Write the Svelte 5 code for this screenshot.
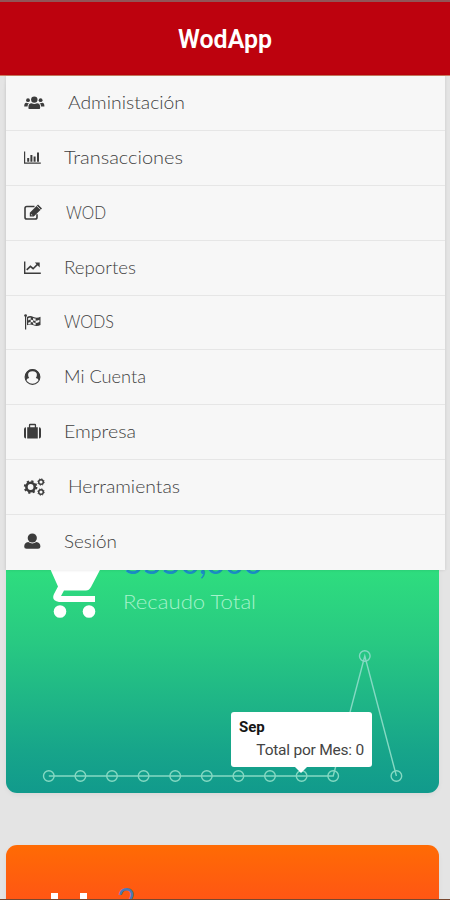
<script lang="ts">
  type Item = { label: string; icon: string; width: number; x: number }

  const items: Item[] = [
    { label: 'Administación', icon: 'users', width: 117, x: 68 },
    { label: 'Transacciones', icon: 'bars', width: 119, x: 64 },
    { label: 'WOD', icon: 'edit', width: 40, x: 66 },
    { label: 'Reportes', icon: 'line', width: 72, x: 64 },
    { label: 'WODS', icon: 'flag', width: 50, x: 64 },
    { label: 'Mi Cuenta', icon: 'account', width: 82, x: 64 },
    { label: 'Empresa', icon: 'suitcase', width: 72, x: 64 },
    { label: 'Herramientas', icon: 'cogs', width: 112, x: 68 },
    { label: 'Sesión', icon: 'user', width: 53, x: 64 },
  ]

  const values = [0, 0, 0, 0, 0, 0, 0, 0, 0, 0, 1, 0]
  const points = values.map((v, i) => ({ x: 42.8 + i * 31.6, y: 206 - v * 120 }))
  const line = points.map((p) => `${p.x},${p.y}`).join(' ')
</script>

<div class="app">
  <header class="header">
    <h1 class="header__title">
      <svg width="98" height="36"><text x="2" y="27" textLength="94" lengthAdjust="spacingAndGlyphs">WodApp</text></svg>
    </h1>
  </header>

  <nav class="menu">
    {#each items as item}
      <a class="menu__item" href="#{item.icon}">
        <svg class="menu__icon" viewBox="0 0 22 20" width="22" height="20">
          {#if item.icon === 'users'}
            <circle cx="11.3" cy="6.6" r="3.2" />
            <circle cx="5" cy="7.2" r="1.9" />
            <circle cx="17.6" cy="7.2" r="1.9" />
            <path d="M6 16q-.6 0-.6-1.5 0-4.2 3.2-4.2 2.7 1.5 5.4 0 3.2 0 3.2 4.2 0 1.5-.9 1.5zM1.2 13.5q0-3.7 2-3.7 1.5.8 3 .3-1.7 1.3-1.7 3.4zM21.4 13.5q0-3.7-2-3.7-1.5.8-3 .3 1.7 1.3 1.7 3.4z" />
          {:else if item.icon === 'bars'}
            <path d="M1 3.5h1.2v11h15.6v1.3H1zM4.2 10h2v3.7h-2zM7.4 7h2v6.7h-2zM10.6 8.4h2v5.3h-2zM14 4.5h2v9.2h-2z" />
          {:else if item.icon === 'edit'}
            <path d="M11.5 3.5H3.8Q2 3.5 2 5.3v8.9Q2 16 3.8 16h8.4q1.8 0 1.8-1.8v-3" class="stroke" />
            <path d="M6.8 9.8 15 1.6l4 3.8-8.2 8.2h-4zM8.2 11v1.2h1.5z" fill-rule="evenodd" />
            <path d="m13.8 2.9 3.8 3.8" class="gap" />
          {:else if item.icon === 'line'}
            <path d="M1 3.5h1.4v11h15.4V16H1z" />
            <path d="m3.7 11.8 3.7-3.5 2.7 2.4L15 5.9" class="stroke" />
            <path d="M11.8 4.5h4.9v4.9z" />
          {:else if item.icon === 'flag'}
            <circle cx="2.6" cy="3.6" r="1.4" />
            <path d="M2 4h1.2v13.5H2zM4 5q3-1.8 6.5 0t7-.3V13q-3.5 2-7 .3T4 13.2zM5.2 6v2.4q1.2-.8 2.5-.8v2.3q-1.3 0-2.5.8v1.6q1.2-.6 2.5-.6V9.9q1.4 0 2.4.6V8.2q-1 0-2.4-.6V5.4Q6.3 5.4 5.2 6zM10.1 6.1v2.2q1.3.6 2.5.5V6.6q-1.2 0-2.5-.5zm0 4.2v2q1.3.7 2.5.7v-2.1q-1.2 0-2.5-.6zm2.5-1.5v2.1q1.8 0 3.8-1V7.8q-1.8 1-3.8 1z" fill-rule="evenodd" />
          {:else if item.icon === 'account'}
            <circle cx="9.5" cy="10" r="7.4" class="ring" />
            <path d="M3.2 13.6A7.4 7.4 0 1 1 15.8 13.6q-.6-2.2-3-2.6 1.1-1.2 1.1-3.2 0-3.6-4.4-3.6T5.1 7.800q0 2 1.1 3.2-2.400.4-3 2.600z" />
          {:else if item.icon === 'suitcase'}
            <path d="M1 7.200Q1 5.200 3 5.200V16.500Q1 16.500 1 14.500zM18 7.200q0-2-2-2V16.500q2 0 2-2z" />
            <path d="M4.200 5.200h1.700V3q0-1.200 1.200-1.200h4.800q1.200 0 1.200 1.200v2.200h1.700V16.500H4.200zm3-2v2h4.600v-2z" fill-rule="evenodd" />
          {:else if item.icon === 'cogs'}
            <circle cx="7.6" cy="10" r="4.2" class="cog" />
            <circle cx="7.6" cy="10" r="5.8" class="teeth" />
            <circle cx="18" cy="5" r="2.3" class="cog cog--small" />
            <circle cx="18" cy="15" r="2.3" class="cog cog--small" />
            <circle cx="18" cy="5" r="3.2" class="teeth teeth--small" />
            <circle cx="18" cy="15" r="3.2" class="teeth teeth--small" />
          {:else}
            <circle cx="9.3" cy="6" r="4.600" />
            <path d="M3.500 16.800q-2.300 0-2.300-2 0-4.400 4-4.800 4.100 2.800 8.200 0 4 .4 4 4.800 0 2-2.300 2z" />
          {/if}
        </svg>
        <svg class="menu__label" width="160" height="28" style="margin-left: {item.x - 45}px">
          <text x="0" y="19.5" textLength={item.width} lengthAdjust="spacingAndGlyphs">{item.label}</text>
        </svg>
      </a>
    {/each}
  </nav>

  <main class="cards">
    <section class="card card--green">
      <div class="card__head">
        <svg class="card__cart" width="52" height="68" viewBox="0 0 52 68">
          <path d="M-6 4H3l4 9h42q4 0 2 4L41 36q-2 3.500-5 3.500H14L11 45h34v6H9q-8-1-5-8l4-7.500z" />
          <circle cx="10" cy="60.500" r="6.300" />
          <circle cx="39" cy="60.500" r="6.300" />
        </svg>
        <div class="card__text">
          <svg width="150" height="36"><text class="card__amount" x="1" y="27" textLength="139">5550,000</text></svg>
          <svg width="150" height="36"><text class="card__label" x="0" y="26" textLength="133" lengthAdjust="spacingAndGlyphs">Recaudo Total</text></svg>
        </div>
      </div>
      <div class="chart">
        <svg width="433" height="223">
          <polyline points={line} />
          {#each points as p}
            <circle cx={p.x} cy={p.y} r="5.3" />
          {/each}
        </svg>
        <div class="tooltip">
          <strong>Sep</strong>
          <span>Total por Mes: 0</span>
        </div>
      </div>
    </section>

    <section class="card card--orange">
      <span class="bar"></span>
      <span class="bar"></span>
      <span class="count">2</span>
    </section>
  </main>
</div>

<style>
  :global(body) {
    background: #e4e4e4;
  }

  .app {
    position: relative;
    height: 900px;
    overflow: hidden;
    box-sizing: border-box;
    border-bottom: 1px solid #77472f;
    font-family: Roboto, 'Liberation Sans', sans-serif;
  }

  svg {
    display: block;
    flex-shrink: 0;
  }

  .header {
    height: 76px;
    box-sizing: border-box;
    border-top: 2px solid #925557;
    border-bottom: 1px solid #cd7d60;
    background: #bd020e;
    display: flex;
    justify-content: center;
    align-items: center;
  }

  .header__title {
    margin: 0;
    font-size: 25px;
    font-weight: 600;
    fill: #fff;
  }

  .menu {
    position: absolute;
    z-index: 2;
    top: 76px;
    left: 6px;
    width: 439px;
    height: 494px;
    background: #f7f7f7;
    display: grid;
    grid-template-rows: repeat(9, 1fr);
    box-shadow: 0 0 3px rgba(0, 0, 0, 0.12);
  }

  .menu__item {
    display: flex;
    align-items: center;
    padding-left: 17px;
    border-bottom: 1px solid #e6e6e6;
    text-decoration: none;
  }

  .menu__item:last-child {
    border-bottom: 0;
    padding-bottom: 1px;
  }

  .menu__icon {
    fill: #3c3c3c;
  }

  .stroke {
    fill: none;
    stroke: #3c3c3c;
    stroke-width: 1.6;
  }

  .ring {
    fill: none;
    stroke: #3c3c3c;
    stroke-width: 1.1;
  }

  .gap {
    stroke: #f7f7f7;
    stroke-width: 0.8;
  }

  .cog {
    fill: none;
    stroke: #3c3c3c;
    stroke-width: 2.6;
  }

  .cog--small {
    stroke-width: 1.5;
  }

  .teeth {
    fill: none;
    stroke: #3c3c3c;
    stroke-width: 2;
    stroke-dasharray: 2.2 2.355;
  }

  .teeth--small {
    stroke-width: 1;
    stroke-dasharray: 1.2 1.313;
  }

  .menu__label {
    font-family: Lato, 'Open Sans', sans-serif;
    font-size: 17px;
    font-weight: 300;
    fill: #3f3f3f;
  }

  .cards {
    padding: 0 11px 0 6px;
    display: grid;
    gap: 52px;
  }

  .card {
    border-radius: 11px;
    box-shadow: 0 2px 5px rgba(0, 0, 0, 0.05);
  }

  .card--green {
    height: 717px;
    box-sizing: border-box;
    padding-top: 475px;
    background: linear-gradient(#2fdf7e 68%, #28c982 79%, #17a58a 94%, #119a8c);
  }

  .card__head {
    height: 19px;
    display: flex;
    align-items: flex-start;
    padding-left: 44px;
    fill: #fff;
  }

  .card__text {
    margin-left: 21px;
    margin-top: -4px;
  }

  .card__amount {
    font-family: Lato, sans-serif;
    font-size: 34px;
    fill: #1b8dc4;
  }

  .card__label {
    font-family: Lato, sans-serif;
    font-size: 19.5px;
    font-weight: 300;
    fill: #a5f2cb;
  }

  .chart {
    position: relative;
  }

  .chart polyline,
  .chart circle {
    fill: none;
    stroke: #85d9c3;
    stroke-width: 1.4;
  }

  .tooltip {
    position: absolute;
    left: 225px;
    top: 142px;
    width: 141px;
    height: 55px;
    box-sizing: border-box;
    padding: 5px 8px 0 8px;
    border-radius: 3px;
    background: #fff;
    color: #444;
    font-size: 15.5px;
    line-height: 20px;
    display: flex;
    flex-direction: column;
    gap: 3px;
    white-space: nowrap;
  }

  .tooltip strong {
    color: #161616;
    font-size: 15px;
  }

  .tooltip span {
    align-self: flex-end;
    letter-spacing: -0.22px;
  }

  .tooltip::after {
    content: '';
    position: absolute;
    left: 64px;
    top: 55px;
    border: 6px solid transparent;
    border-top-color: #fff;
    border-bottom: 0;
  }

  .card--orange {
    height: 130px;
    background: linear-gradient(#ff6b04, #ff5217 50%);
    display: flex;
    align-items: flex-start;
    padding-left: 45px;
  }

  .bar {
    width: 7px;
    height: 30px;
    margin: 48px 22px 0 0;
    background: #fff;
  }

  .count {
    margin: 36px 0 0 8px;
    font-family: Lato, sans-serif;
    font-size: 32px;
    line-height: 38px;
    color: #4d78b5;
  }
</style>
